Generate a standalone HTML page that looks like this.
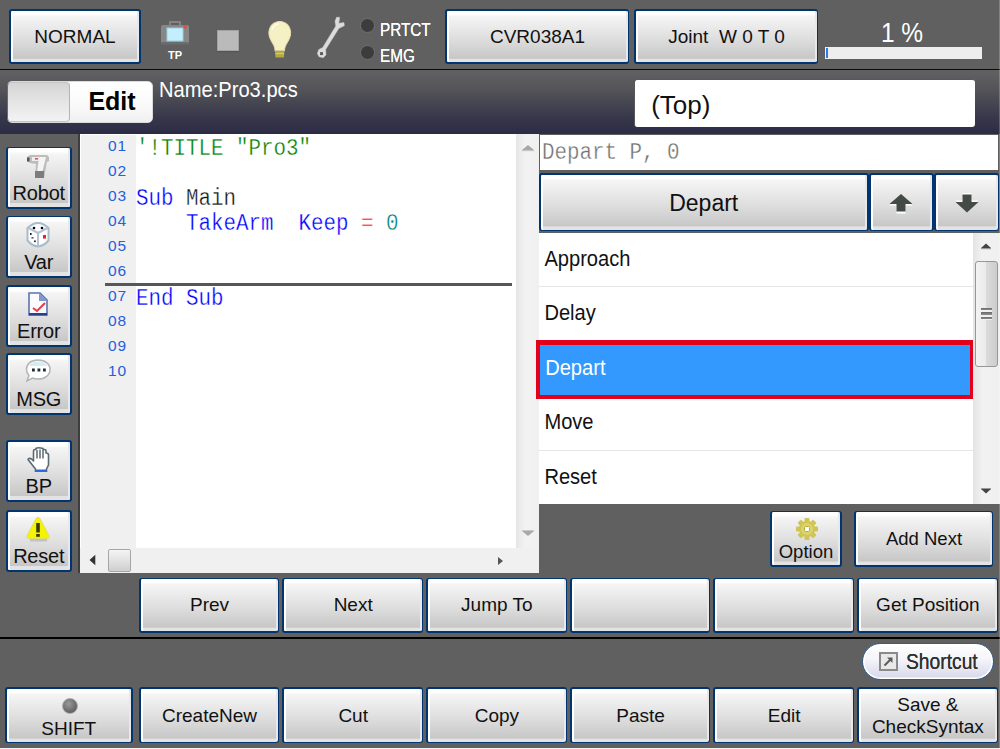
<!DOCTYPE html>
<html><head><meta charset="utf-8"><title>Pro3.pcs - Edit</title>
<style>
*{box-sizing:border-box;margin:0;padding:0}
html,body{width:1000px;height:749px;overflow:hidden;background:#606060;font-family:"Liberation Sans",sans-serif;color:#111}
#root{position:relative;width:1000px;height:749px;background:#606060;overflow:hidden}
.abs{position:absolute}
.btn{position:absolute;border:solid #00356f;border-width:1px 1px 2px 2px;border-radius:3px;background:linear-gradient(#ffffff 0%,#ffffff 6%,#f5f5f5 10%,#dedede 55%,#c7c7c7 93%,#e3e3e3 94%,#e3e3e3 100%);box-shadow:inset 2px 0 0 #fff,inset -2px 0 0 #e8e8e8;display:flex;align-items:center;justify-content:center;text-align:center;font-size:19px;color:#111;line-height:22px}
.btn span{display:inline-block}
.fk{font-size:19px}
.side{flex-direction:column;justify-content:flex-start;font-size:20px;letter-spacing:-0.2px}
.side svg{position:absolute;left:16px;top:2.5px}
.t2 b{top:33px !important}.t2 svg{top:1.5px !important}
.side b{position:absolute;left:-0.5px;right:0;top:34px;font-weight:normal;line-height:22px}
.sep{left:0;width:1000px;height:2px;background:#0a0a0a}
.bar2{left:0;top:70.2px;width:1000px;height:63.8px;background:linear-gradient(#616162 0%,#57575b 25%,#474752 50%,#37374b 75%,#2b2b45 100%)}
.code{position:absolute;font-family:"Liberation Mono",monospace;font-size:23px;white-space:pre;line-height:25px;height:25px;transform-origin:0 0;transform:scaleX(0.9058);-webkit-text-stroke:0.35px #fff}
.ln{position:absolute;left:108px;font-size:15.5px;color:#2460dc;line-height:14px;height:14px;letter-spacing:0.9px}
.li{position:absolute;left:539px;width:434px;height:55px;background:#fff;border-bottom:1px solid #e6e6e6;font-size:20.1px;line-height:52px;padding-left:5.4px;color:#111}
.li span{display:inline-block;transform:scaleY(1.06);transform-origin:50% 62%}
.kw{color:#0000ff}.cm{color:#008000}.op{color:#ff0000}.nm{color:#008080}
</style></head><body><div id="root">

<!-- top bar -->
<div class="btn" style="left:9px;top:9px;width:132px;height:55px;border-width:2px;padding-top:1px">NORMAL</div>
<div class="btn" style="left:445px;top:9px;width:184px;height:55px;border-width:2px 1px 2px 2px;padding-top:1px">CVR038A1</div>
<div class="btn" style="left:634px;top:9px;width:184px;height:55px;border-width:2px 1px 2px 2px;padding-top:1px">Joint&nbsp; W 0 T 0</div>
<div class="abs" style="left:823.5px;top:18.5px;width:157px;text-align:center;font-size:24.5px;color:#fff;line-height:28px;transform:scaleY(1.13)">1 %</div>
<div class="abs" style="left:825px;top:47px;width:157px;height:12px;background:#eeeeee"></div>
<div class="abs" style="left:826px;top:48px;width:2px;height:10px;background:#2f7be8"></div>
<div class="abs sep" style="top:68.6px;height:1.6px"></div>

<!-- status icons -->
<svg class="abs" style="left:158px;top:20px" width="36" height="42" viewBox="0 0 36 42">
 <rect x="12" y="2" width="10" height="4" fill="none" stroke="#8c8c8c" stroke-width="1.6"/>
 <rect x="3" y="5" width="28" height="19" rx="2" fill="#878787"/>
 <rect x="3.5" y="22" width="27" height="2.5" fill="#6c6c6c"/>
 <rect x="9" y="8" width="16" height="13" fill="#c4eefb"/>
 <rect x="9" y="8" width="16" height="13" fill="none" stroke="#9ccfe0" stroke-width="1"/>
 <rect x="25.5" y="5" width="3" height="3.5" fill="#e8484a"/>
 <text x="17" y="39" font-family="Liberation Sans, sans-serif" font-size="11" font-weight="bold" fill="#fff" text-anchor="middle">TP</text>
</svg>
<div class="abs" style="left:217px;top:30px;width:22px;height:21px;background:#bababa;border:1px solid #a2a2a2;box-shadow:0 1px 1px #555"></div>
<svg class="abs" style="left:265px;top:17.5px" width="29.500" height="44.500" viewBox="0 0 32 44" preserveAspectRatio="none">
 <path d="M16 3.5 C9 3.5 4.2 8.5 4.2 15 C4.2 20 7.5 23 9.5 27 C10.5 29 10.8 31 11 32.5 L21 32.5 C21.2 31 21.5 29 22.5 27 C24.5 23 27.8 20 27.8 15 C27.8 8.5 23 3.5 16 3.5 Z" fill="#f6f1c4" stroke="#e4deb0" stroke-width="1"/>
 <rect x="11.2" y="32.5" width="9.6" height="6.5" rx="1" fill="#b4aa44"/>
 <rect x="11.2" y="34.5" width="9.6" height="1.2" fill="#d6cc66"/>
 <path d="M8 11 C9 8 11.5 6.5 14 6" fill="none" stroke="#fffde8" stroke-width="1.6" stroke-linecap="round"/>
</svg>
<svg class="abs" style="left:310px;top:10px" width="45" height="55" viewBox="0 0 45 55">
 <path d="M25.800 16 L25 11.500 L26.500 7.300 L29.700 7.300 L28.800 13.300 L34 12.600 L34.300 15.800 L28.800 18.400 L15.700 39.500 L16 45 L13.200 47.800 L9 46.800 L7.300 43.500 L8.800 39.500 L12.700 37.500 Z" fill="#dcdcdc" stroke="#c8c8c8" stroke-width="0.500" stroke-linejoin="round"/>
 <rect x="10.100" y="42.100" width="2.800" height="3" fill="#565656"/>
</svg>
<div class="abs" style="left:360px;top:18px;width:15px;height:15px;border-radius:50%;background:#3c3c3c;border:1px solid #707070"></div>
<div class="abs" style="left:360px;top:45px;width:15px;height:15px;border-radius:50%;background:#3c3c3c;border:1px solid #707070"></div>
<div class="abs" style="left:380px;top:20.5px;font-size:15.3px;line-height:18px;color:#fff;text-shadow:0 0 0.6px #fff;transform:scaleY(1.17)">PRTCT</div>
<div class="abs" style="left:380px;top:47px;font-size:15.3px;line-height:18px;color:#fff;text-shadow:0 0 0.6px #fff;transform:scaleY(1.17)">EMG</div>

<!-- second bar -->
<div class="abs bar2"></div>
<div class="abs" style="left:7px;top:81px;width:146px;height:42px;border-radius:5px;background:linear-gradient(#ffffff,#fbfbfb 50%,#f0f0f0);border:1px solid #dadada"></div>
<div class="abs" style="left:7.2px;top:81.8px;width:62.6px;height:40.6px;border-radius:4px;background:linear-gradient(#d4d4d4,#e2e2e2 40%,#f3f3f3);border:1px solid #c4c4c4;border-right:1.5px solid #b4b4b4;border-left:1.2px solid #5a6a9a"></div>
<div class="abs" style="left:70px;top:80px;width:83px;height:42px;font-weight:bold;font-size:25px;line-height:42px;text-align:center;color:#000;padding-left:1px">Edit</div>
<div class="abs" style="left:159px;top:77.5px;font-size:22px;color:#fff;line-height:24px;white-space:nowrap;transform-origin:0 0;transform:scaleX(0.915)">Name:Pro3.pcs</div>
<div class="abs" style="left:634.2px;top:78.6px;width:341px;height:48.8px;background:#fff;border-radius:3px;border:solid #585858;border-width:1.6px 0 0 1.6px;font-size:26px;line-height:50px;padding-left:16px;color:#111">(Top)</div>

<!-- sidebar -->
<div class="btn side" style="left:6px;top:147px;width:66px;height:62px;border-width:1px 2px 2px 2px">
 <svg width="28" height="28" viewBox="0 0 28 28"><path d="M3 6 L6 4 L23 4 L25 6 L25 10 L23 11 L20 27 L11 27 L12 13 L6 12 L3 10 Z" fill="#bdbdbd"/><path d="M15 6 L22 6 L18 22 L13 22 Z" fill="#f4f4f4"/><rect x="11" y="20" width="9" height="7" fill="#7c7c7c"/><rect x="8" y="6" width="8" height="4" fill="#ededed"/><rect x="11" y="7" width="3" height="1.6" fill="#e85050"/><rect x="3" y="6.5" width="2.5" height="4" fill="#555"/></svg>
 <b>Robot</b></div>
<div class="btn side" style="left:6px;top:216px;width:66px;height:62px;border-width:1px 2px 2px 2px">
 <svg width="28" height="28" viewBox="0 0 28 28"><path d="M14 3 Q19 3 24.500 8 L24.500 20.500 Q20 26 14 26.500 Q8 26 3.500 20.500 L3.500 8 Q9 3 14 3 Z" fill="#fdfdff" stroke="#a9bccb" stroke-width="2" stroke-linejoin="round"/><path d="M4.5 8 L14 13 L23.5 8 M14 13 L14 26" fill="none" stroke="#b4c2d2" stroke-width="2"/><circle cx="10" cy="8" r="1.3" fill="#000"/><circle cx="18" cy="8" r="1.3" fill="#000"/><rect x="6" y="13" width="1.6" height="2" fill="#222"/><rect x="7.5" y="17" width="2" height="1.6" fill="#555"/><rect x="10" y="20.5" width="1.8" height="1.6" fill="#222"/><rect x="19" y="15" width="3" height="3.6" fill="#ee2222"/></svg>
 <b>Var</b></div>
<div class="btn side t2" style="left:6px;top:285px;width:66px;height:62px;border-width:2px 2px 2px 2px">
 <svg width="28" height="28" viewBox="0 0 28 28"><path d="M5 4 L16 4 L23 11 L23 26 L5 26 Z" fill="#fbfbff" stroke="#5874b8" stroke-width="1.6"/><path d="M15 4 L15 12 L23 12 Z" fill="#7f98d0"/><rect x="5" y="24" width="18" height="2.4" fill="#24408e"/><path d="M9 19 L13 22 L21 14" fill="none" stroke="#e63a44" stroke-width="2"/></svg>
 <b>Error</b></div>
<div class="btn side t2" style="left:6px;top:353px;width:66px;height:62px;border-width:2px 2px 2px 2px">
 <svg width="28" height="28" viewBox="0 0 28 28"><path d="M14 3 C21 3 26 7 26 12.5 C26 18 21 22 14 22 C12 22 10 21.7 8.5 21 L3 24 L5 18.5 C3.5 17 2.5 14.8 2.5 12.5 C2.5 7 7 3 14 3 Z" fill="#fff" stroke="#b4b4b4" stroke-width="1.5"/><path d="M5 9 C7 5.5 10 4.5 14 4.5 C18 4.5 22 6 23.5 9 Z" fill="#d4ecf4"/><rect x="8" y="11.5" width="2.8" height="3" fill="#222c36"/><rect x="13.5" y="11.5" width="2.8" height="3" fill="#222c36"/><rect x="19" y="11.5" width="2.8" height="3" fill="#222c36"/></svg>
 <b>MSG</b></div>
<div class="btn side t2" style="left:6px;top:440px;width:66px;height:62px;border-width:2px 2px 2px 2px">
 <svg width="28" height="28" viewBox="0 0 28 28"><path d="M9.5 17 L9.5 7 Q9.5 5.5 11 5.5 L12 5.500 L12 4.500 Q14 3 19 4.500 L19 5.500 L20.5 5.500 Q22 5.500 22 7 L22 9 Q24.500 9 24.500 11 L24.500 21 L22.500 25 L22.500 28 L11.500 28 L11.500 25 L4 15.500 Q5 13.500 7.500 15 Z" fill="#fff" stroke="#5b6a72" stroke-width="1.6" stroke-linejoin="round"/><path d="M13 6 L13 14.500 M16 5.500 L16 14.500 M19 6 L19 14.500" stroke="#5b6a72" stroke-width="1.5" fill="none"/><rect x="11.5" y="25.5" width="11" height="3" fill="#2a6be0"/></svg>
 <b>BP</b></div>
<div class="btn side t2" style="left:6px;top:510px;width:66px;height:62px;border-width:2px 2px 2px 2px">
 <svg width="28" height="28" viewBox="0 0 28 28"><path d="M6 26 L23 26" stroke="#c2c2c8" stroke-width="3"/><path d="M14 3.500 Q15.500 3.500 16.500 5.500 L25 22 Q25.500 24.500 23 24.500 L5 24.500 Q2.500 24.500 3 22 L11.500 5.500 Q12.500 3.500 14 3.500 Z" fill="#f4f400" stroke="#e0e060" stroke-width="1"/><rect x="12.2" y="9" width="3.600" height="9.500" fill="#3a3a00"/><rect x="12.2" y="20" width="3.600" height="2.800" fill="#3a3a00"/></svg>
 <b>Reset</b></div>

<!-- editor -->
<div class="abs" style="left:80px;top:134px;width:459px;height:439px;background:#fff"></div>
<div class="abs" style="left:80px;top:134px;width:56px;height:414px;background:#f0f0f0"></div>
<div class="abs" style="left:78px;top:134px;width:2px;height:439px;background:#3d3d3d"></div>
<div class="abs" style="left:80px;top:134px;width:1px;height:414px;background:#fff"></div>
<div class="abs" style="left:80px;top:134px;width:56px;height:1px;background:#fff"></div>
<div class="abs" style="left:515.5px;top:134px;width:23.5px;height:414px;background:linear-gradient(90deg,#e6e6e6,#f2f2f2 40%,#f0f0f0)"></div>
<div class="abs" style="left:80px;top:548px;width:459px;height:25px;background:#f0f0f0"></div>
<div class="abs" style="left:105px;top:283.1px;width:407px;height:2.9px;background:#575757"></div>
<div class="ln" style="top:139px">01</div>
<div class="ln" style="top:164px">02</div>
<div class="ln" style="top:189px">03</div>
<div class="ln" style="top:214px">04</div>
<div class="ln" style="top:239px">05</div>
<div class="ln" style="top:264px">06</div>
<div class="ln" style="top:289px">07</div>
<div class="ln" style="top:314px">08</div>
<div class="ln" style="top:339px">09</div>
<div class="ln" style="top:364px">10</div>
<div class="code cm" style="left:136px;top:137.3px">'!TITLE "Pro3"</div>
<div class="code" style="left:136px;top:187.3px"><span class="kw">Sub</span> Main</div>
<div class="code kw" style="left:136px;top:212.3px">    TakeArm  Keep <span class="op">=</span> <span class="nm">0</span></div>
<div class="code kw" style="left:136px;top:287.3px">End Sub</div>
<!-- editor scrollbars -->
<svg class="abs" style="left:521px;top:143px" width="14" height="10" viewBox="0 0 14 10"><path d="M1 7 L7 2 L13 7 Z" fill="#a8a8a8"/><rect x="1" y="7" width="12" height="1.2" fill="#c8c8c8"/></svg>
<svg class="abs" style="left:521px;top:528px" width="14" height="10" viewBox="0 0 14 10"><rect x="1" y="2" width="12" height="1.2" fill="#c8c8c8"/><path d="M1 3 L7 8 L13 3 Z" fill="#a8a8a8"/></svg>
<svg class="abs" style="left:86.500px;top:552.500px" width="10" height="14" viewBox="0 0 10 14"><path d="M8.300 1.800 L2.500 7 L8.300 12.200 Z" fill="#333"/></svg>
<svg class="abs" style="left:496px;top:554px" width="10" height="14" viewBox="0 0 10 14"><path d="M2 3 L7 7 L2 11 Z" fill="#555"/></svg>
<div class="abs" style="left:108px;top:549px;width:23px;height:23px;border:1px solid #a6a6a6;border-radius:2px;background:linear-gradient(#f4f4f4,#e2e2e2 50%,#cfcfcf)"></div>

<!-- right panel -->
<div class="abs" style="left:539px;top:134px;width:461px;height:38px;background:#fff;border:2px solid #5e5e5e;border-top-width:1px;border-left-width:1px"></div>
<div class="code" style="left:541.5px;top:141px;color:#707070">Depart P, 0</div>
<div class="btn" style="left:539px;top:173px;width:329.5px;height:58px;font-size:23px;border-width:2px 2px 1px 2px;padding-top:1px">Depart</div>
<div class="btn" style="left:868.5px;top:173px;width:65.5px;height:58px;border-width:2px 2px 1px 2px"><svg style="margin-top:1.5px" width="28" height="24" viewBox="0 0 28 24"><path d="M14 4.500 L25.500 14.500 L18.500 14.500 L18.500 22.500 L9.500 22.500 L9.500 14.500 L2.500 14.500 Z" fill="#fff"/><path d="M14 3 L25.500 13 L18.500 13 L18.500 20.500 L9.500 20.500 L9.500 13 L2.500 13 Z" fill="#444a46"/></svg></div>
<div class="btn" style="left:934px;top:173px;width:64.5px;height:58px;border-width:2px 1px 1px 2px"><svg style="margin-top:1.5px" width="28" height="24" viewBox="0 0 28 24"><path d="M9.500 2 L18.500 2 L18.500 9.500 L25.500 9.500 L14 20 L2.500 9.500 L9.500 9.500 Z" fill="#fff"/><path d="M9.500 3.500 L18.500 3.500 L18.500 11 L25.500 11 L14 21.500 L2.500 11 L9.500 11 Z" fill="#444a46"/></svg></div>

<div class="abs" style="left:539px;top:233px;width:461px;height:271px;background:#fff"></div>
<div class="li" style="top:233px;height:54px;line-height:52.5px"><span>Approach</span></div>
<div class="li" style="top:287px;height:54px;line-height:53.5px"><span>Delay</span></div>
<div class="li" style="top:340px;height:59px;background:#3399ff;border:solid #e2001a;border-width:5px 4px 4px 4px;color:#fff;line-height:46.5px;padding-left:5.2px;left:536px;width:438px"><span>Depart</span></div>
<div class="li" style="top:399px;height:52px;line-height:46px"><span>Move</span></div>
<div class="li" style="top:451px;height:53px;border-bottom:none;line-height:52.5px"><span>Reset</span></div>
<div class="abs" style="left:973px;top:233px;width:27px;height:271px;background:linear-gradient(90deg,#e4e4e4,#f1f1f1 35%,#f0f0f0)"></div>
<div class="abs" style="left:975px;top:261px;width:23px;height:106px;border:1px solid #979797;border-radius:3px;background:linear-gradient(90deg,#f3f3f3,#ebebeb 45%,#dadada 50%,#cdcdcd 100%)"></div>
<div class="abs" style="left:981px;top:307.5px;width:11px;height:12px;background:repeating-linear-gradient(#6e6e6e 0,#8a8a8a 2.2px,#f0f0f0 2.2px,#f0f0f0 4.4px)"></div>
<svg class="abs" style="left:979px;top:241px" width="14" height="10" viewBox="0 0 14 10"><path d="M2 7 L7 2.500 L12 7 Z" fill="#444"/><rect x="2" y="7" width="10" height="1.200" fill="#999"/></svg>
<svg class="abs" style="left:979px;top:486px" width="14" height="10" viewBox="0 0 14 10"><rect x="2" y="2" width="10" height="1.200" fill="#999"/><path d="M2 3 L7 7.500 L12 3 Z" fill="#444"/></svg>

<div class="btn" style="left:770px;top:511px;width:72px;height:56px;font-size:18.500px;border-width:1px 2px 2px 2px"><svg class="abs" style="left:22.500px;top:4.500px" width="24" height="24" viewBox="0 0 24 24"><g fill="#cfc556"><circle cx="12" cy="12" r="8"/><rect x="9.500" y="1" width="5" height="22" rx="1"/><rect x="1" y="9.500" width="22" height="5" rx="1"/><rect x="9.500" y="1" width="5" height="22" rx="1" transform="rotate(45 12 12)"/><rect x="9.500" y="1" width="5" height="22" rx="1" transform="rotate(-45 12 12)"/></g><circle cx="12" cy="12" r="6" fill="#ddd468"/><rect x="9.500" y="9.500" width="5" height="5" rx="1" fill="#fff" stroke="#b6ac40" stroke-width="1"/></svg><span class="abs" style="left:0;right:0;top:29px">Option</span></div>
<div class="btn" style="left:854px;top:511px;width:139px;height:56px;font-size:18.500px;border-width:1px 1px 2px 2px">Add Next</div>

<!-- function keys -->
<div class="btn fk" style="left:138.67px;top:578px;width:140.7px;height:55px;border-width:1px 1px 2px 2px" >Prev</div>
<div class="btn fk" style="left:282.34px;top:578px;width:140.7px;height:55px;border-width:1px 1px 2px 2px" >Next</div>
<div class="btn fk" style="left:426.01px;top:578px;width:140.7px;height:55px;border-width:1px 1px 2px 2px" >Jump To</div>
<div class="btn fk" style="left:569.68px;top:578px;width:140.7px;height:55px;border-width:1px 1px 2px 2px"></div>
<div class="btn fk" style="left:713.35px;top:578px;width:140.7px;height:55px;border-width:1px 1px 2px 2px"></div>
<div class="btn fk" style="left:857.02px;top:578px;width:140.7px;height:55px;border-width:1px 1px 2px 2px" >Get Position</div>
<div class="abs sep" style="top:637px;height:1.8px;background:#000"></div>

<div class="abs" style="left:861.5px;top:642.5px;width:132px;height:37.5px;border-radius:19px;border:1.5px solid #2f5f8f;background:linear-gradient(#ffffff,#f4f4fa 45%,#d6d6ea);box-shadow:inset 0 0 0 1.5px #fff"></div>
<div class="abs" style="left:879px;top:652px;width:19px;height:19px;border:2px solid #8a8a8a;background:#e8e8e8"></div>
<svg class="abs" style="left:881px;top:654px" width="15" height="15" viewBox="0 0 15 15"><path d="M3.500 11.500 L10 5" stroke="#5a5a5a" stroke-width="2" fill="none"/><path d="M6 3.500 L11.500 3.500 L11.500 9 Z" fill="#5a5a5a"/></svg>
<div class="abs" style="left:905.5px;top:648.5px;font-size:22px;line-height:26px;color:#303030;white-space:nowrap;transform-origin:0 50%;transform:scaleX(0.875);text-shadow:0 0 0.6px #303030,0 0 2px #fff">Shortcut</div>

<div class="btn fk" style="left:5px;top:687px;width:127.5px;height:56px;border-width:2px 2px 1px 2px"><span class="abs" style="left:54.5px;top:8.5px;width:16px;height:16px;border-radius:50%;background:radial-gradient(circle at 40% 35%,#9a9a9a,#6e6e6e 55%,#555 100%);border:1px solid #aaa"></span><span class="abs" style="left:0;right:0;top:28.8px">SHIFT</span></div>
<div class="btn fk" style="left:138.67px;top:687px;width:140.7px;height:56px;border-width:2px 1px 1px 2px">CreateNew</div>
<div class="btn fk" style="left:282.34px;top:687px;width:140.7px;height:56px;border-width:2px 1px 1px 2px">Cut</div>
<div class="btn fk" style="left:426.01px;top:687px;width:140.7px;height:56px;border-width:2px 1px 1px 2px">Copy</div>
<div class="btn fk" style="left:569.68px;top:687px;width:140.7px;height:56px;border-width:2px 1px 1px 2px">Paste</div>
<div class="btn fk" style="left:713.35px;top:687px;width:140.7px;height:56px;border-width:2px 1px 1px 2px">Edit</div>
<div class="btn fk" style="left:857.02px;top:687px;width:140.7px;height:56px;border-width:2px 1px 1px 2px;line-height:22px">Save &amp;<br>CheckSyntax</div>

<div class="abs" style="left:0;top:748.3px;width:1000px;height:0.7px;background:#f4f4f4"></div>
<div class="abs" style="left:999px;top:0;width:1px;height:749px;background:rgba(255,255,255,0.22)"></div>
</div></body></html>
